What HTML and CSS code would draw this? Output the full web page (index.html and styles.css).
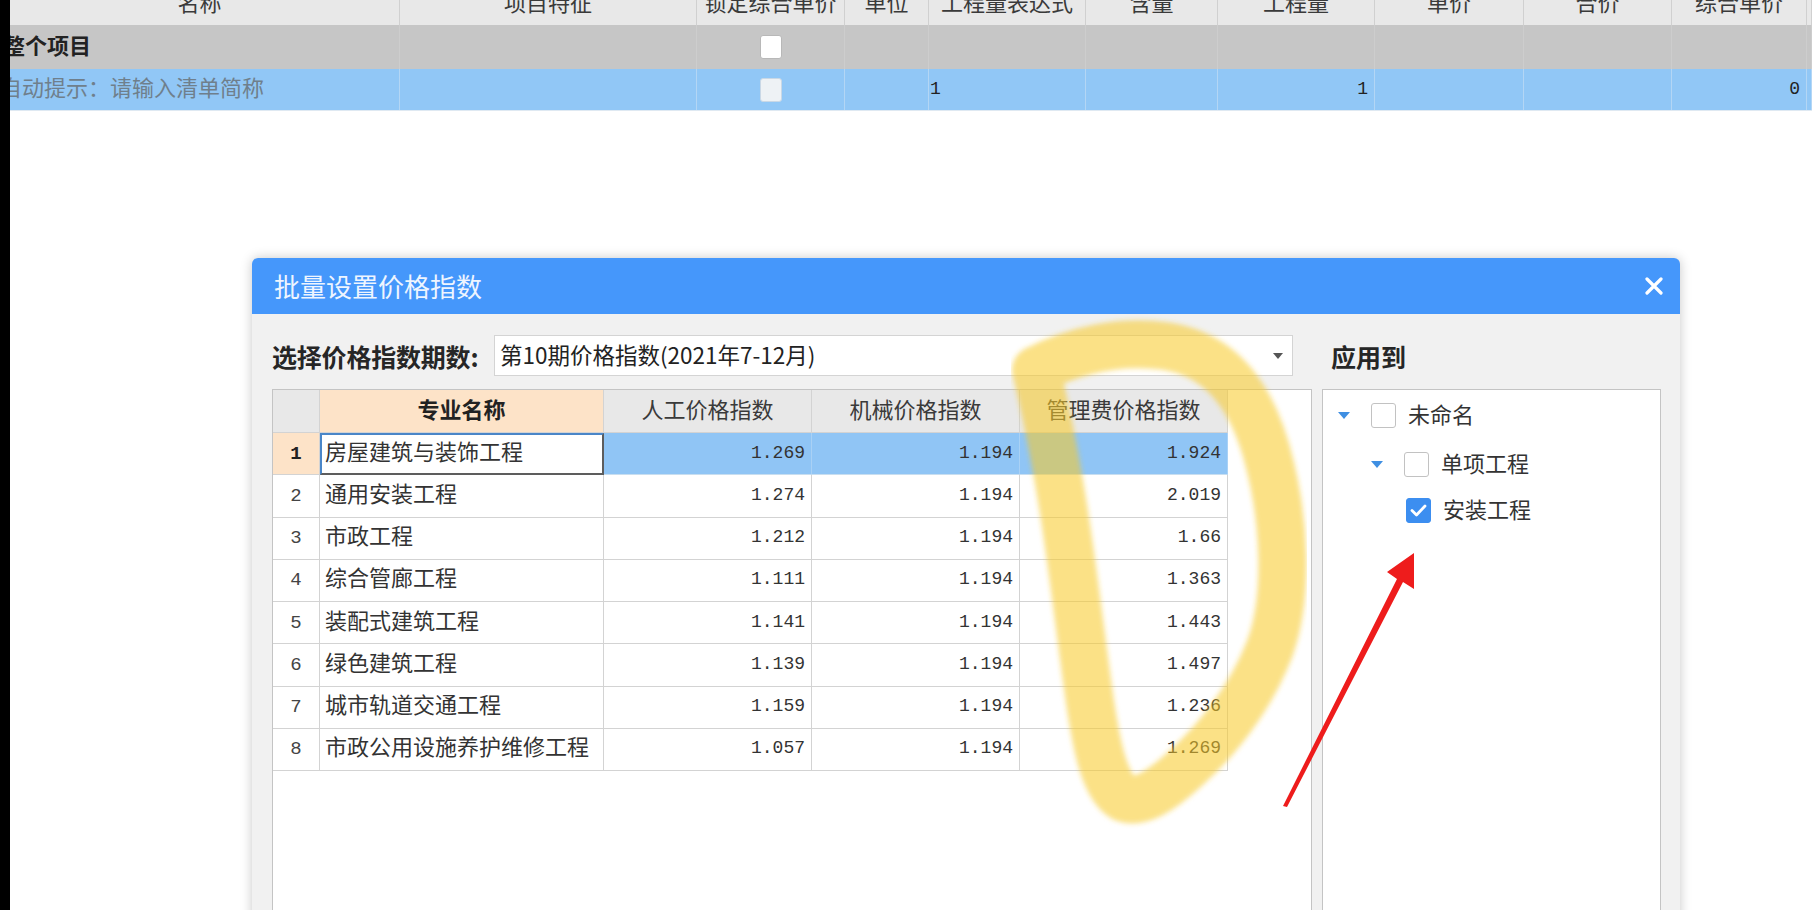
FILE: index.html
```html
<!DOCTYPE html>
<html lang="zh-CN">
<head>
<meta charset="utf-8">
<title>批量设置价格指数</title>
<link rel="stylesheet" href="styles.css">
</head>
<body>
<div class="screen">
  <div class="edge"></div>
  <div class="app">
    <div class="topgrid">
      <div class="trow thead">
        <div class="tc">名称</div>
        <div class="tc">项目特征</div>
        <div class="tc">锁定综合单价</div>
        <div class="tc">单位</div>
        <div class="tc">工程量表达式</div>
        <div class="tc">含量</div>
        <div class="tc">工程量</div>
        <div class="tc">单价</div>
        <div class="tc">合价</div>
        <div class="tc">综合单价</div>
        <div class="tc"></div>
      </div>
      <div class="trow tgroup">
        <div class="tc tname">整个项目</div>
        <div class="tc"></div>
        <div class="tc tcheck"><span class="mini-cb"></span></div>
        <div class="tc"></div>
        <div class="tc"></div>
        <div class="tc"></div>
        <div class="tc"></div>
        <div class="tc"></div>
        <div class="tc"></div>
        <div class="tc"></div>
        <div class="tc"></div>
      </div>
      <div class="trow tsel">
        <div class="tc thint">自动提示：请输入清单简称</div>
        <div class="tc"></div>
        <div class="tc tcheck"><span class="mini-cb dim"></span></div>
        <div class="tc"></div>
        <div class="tc tnum-l">1</div>
        <div class="tc"></div>
        <div class="tc tnum-r">1</div>
        <div class="tc"></div>
        <div class="tc"></div>
        <div class="tc tnum-r">0</div>
        <div class="tc"></div>
      </div>
    </div>

    <div class="stage">
      <div class="dialog">
        <div class="dlg-title">
          <span class="dlg-title-text">批量设置价格指数</span>
          <svg class="dlg-close" width="18" height="18" viewBox="0 0 18 18"><path d="M2 2 L16 16 M16 2 L2 16" stroke="#ffffff" stroke-width="3.2" stroke-linecap="round"/></svg>
        </div>
        <div class="dlg-body">
          <div class="left">
            <div class="period-row">
              <span class="period-label">选择价格指数期数:</span>
              <div class="select">
                <span class="select-text">第10期价格指数(2021年7-12月)</span>
                <span class="caret"></span>
              </div>
            </div>
            <div class="grid">
              <div class="g-row g-head">
                <div class="gc gc-no"></div>
                <div class="gc gc-name-head">专业名称</div>
                <div class="gc gc-head">人工价格指数</div>
                <div class="gc gc-head">机械价格指数</div>
                <div class="gc gc-head">管理费价格指数</div>
              </div>
              <div class="g-row g-active">
                <div class="gc gc-no no-active">1</div>
                <div class="gc gc-name gc-edit">房屋建筑与装饰工程</div>
                <div class="gc gc-num">1.269</div>
                <div class="gc gc-num">1.194</div>
                <div class="gc gc-num">1.924</div>
              </div>
              <div class="g-row">
                <div class="gc gc-no">2</div>
                <div class="gc gc-name">通用安装工程</div>
                <div class="gc gc-num">1.274</div>
                <div class="gc gc-num">1.194</div>
                <div class="gc gc-num">2.019</div>
              </div>
              <div class="g-row">
                <div class="gc gc-no">3</div>
                <div class="gc gc-name">市政工程</div>
                <div class="gc gc-num">1.212</div>
                <div class="gc gc-num">1.194</div>
                <div class="gc gc-num">1.66</div>
              </div>
              <div class="g-row">
                <div class="gc gc-no">4</div>
                <div class="gc gc-name">综合管廊工程</div>
                <div class="gc gc-num">1.111</div>
                <div class="gc gc-num">1.194</div>
                <div class="gc gc-num">1.363</div>
              </div>
              <div class="g-row">
                <div class="gc gc-no">5</div>
                <div class="gc gc-name">装配式建筑工程</div>
                <div class="gc gc-num">1.141</div>
                <div class="gc gc-num">1.194</div>
                <div class="gc gc-num">1.443</div>
              </div>
              <div class="g-row">
                <div class="gc gc-no">6</div>
                <div class="gc gc-name">绿色建筑工程</div>
                <div class="gc gc-num">1.139</div>
                <div class="gc gc-num">1.194</div>
                <div class="gc gc-num">1.497</div>
              </div>
              <div class="g-row">
                <div class="gc gc-no">7</div>
                <div class="gc gc-name">城市轨道交通工程</div>
                <div class="gc gc-num">1.159</div>
                <div class="gc gc-num">1.194</div>
                <div class="gc gc-num">1.236</div>
              </div>
              <div class="g-row">
                <div class="gc gc-no">8</div>
                <div class="gc gc-name">市政公用设施养护维修工程</div>
                <div class="gc gc-num">1.057</div>
                <div class="gc gc-num">1.194</div>
                <div class="gc gc-num">1.269</div>
              </div>
            </div>
          </div>
          <div class="right">
            <div class="apply-title">应用到</div>
            <div class="tree">
              <div class="tree-row lvl0">
                <span class="tri"></span>
                <span class="cb"></span>
                <span class="tree-label">未命名</span>
              </div>
              <div class="tree-row lvl1">
                <span class="tri"></span>
                <span class="cb"></span>
                <span class="tree-label">单项工程</span>
              </div>
              <div class="tree-row lvl2">
                <span class="cb checked"><svg width="25" height="25" viewBox="0 0 25 25"><path d="M6 12.5 L10.5 17 L19 8" fill="none" stroke="#ffffff" stroke-width="2.8" stroke-linecap="round" stroke-linejoin="round"/></svg></span>
                <span class="tree-label">安装工程</span>
              </div>
            </div>
          </div>
        </div>
      </div>
    </div>
  </div>
</div>

<svg class="annot" width="1812" height="910" viewBox="0 0 1812 910">
  <defs>
    <filter id="soft" x="-10%" y="-10%" width="120%" height="120%">
      <feGaussianBlur stdDeviation="2.5"/>
    </filter>
  </defs>
  <path class="marker" filter="url(#soft)" d="M1036 370 C1075 350 1120 340 1165 346 C1220 354 1250 395 1266 450 C1286 520 1288 598 1270 648 C1250 700 1215 742 1186 768 C1160 792 1140 804 1124 798 C1104 788 1096 742 1090 702 C1080 632 1072 560 1062 500 C1054 452 1046 410 1036 370"/>
  <polygon class="arrow" points="1414,553 1387,572 1397,579 1283,806 1287,807 1403,582 1414,589"/>
</svg>
</body>
</html>
```

FILE: styles.css
```css
html, body {
  margin: 0;
  padding: 0;
}

body {
  width: 1812px;
  height: 910px;
  overflow: hidden;
  background: #ffffff;
  font-family: "Noto Sans CJK SC", "Noto Sans", sans-serif;
  color: #333333;
  position: relative;
}

.screen {
  display: flex;
  height: 910px;
}

.edge {
  width: 10px;
  flex: none;
  background: #000000;
}

.app {
  flex: 1;
  min-width: 0;
  overflow: hidden;
  display: flex;
  flex-direction: column;
}

/* ---------- background list grid ---------- */
.topgrid {
  margin-left: -10px;
  overflow: hidden;
  flex: none;
}

.trow {
  display: grid;
  grid-template-columns: 400px 297px 148px 84px 157px 132px 157px 149px 148px 135px 1fr;
}

.tc {
  box-sizing: border-box;
  border-right: 1px solid #d0d0d0;
  font-size: 22px;
  white-space: nowrap;
  overflow: hidden;
}

.thead {
  height: 44px;
  margin-top: -19px;
  background: #e8e8e8;
}

.thead .tc {
  line-height: 40px;
  text-align: center;
  color: #3a3a3a;
}

.tgroup {
  height: 44px;
  background: #c6c6c6;
}

.tgroup .tc {
  line-height: 38px;
  border-right-color: #cdcdcd;
}

.tname {
  font-weight: bold;
  color: #222222;
  padding-left: 3px;
}

.tsel {
  height: 41px;
  background: #91c7f6;
  border-bottom: 1px solid #dfe9f2;
}

.tsel .tc {
  line-height: 40px;
  border-right-color: #b3d6f5;
}

.tsel .thint {
  color: #6f7f8c;
  padding-left: 0;
  line-height: 34px;
}

.tcheck {
  display: flex;
  align-items: center;
  justify-content: center;
}

.mini-cb {
  width: 22px;
  height: 24px;
  box-sizing: border-box;
  background: #ffffff;
  border: 1px solid #b8b8b8;
  border-radius: 3px;
}

.mini-cb.dim {
  background: #eef2f5;
  border-color: #c9d8e6;
}

.tnum-l,
.tnum-r {
  font-family: "Liberation Mono", monospace;
  font-size: 18px;
  color: #222222;
}

.tnum-l {
  padding-left: 1px;
}

.tnum-r {
  text-align: right;
  padding-right: 6px;
}

/* ---------- dialog ---------- */
.stage {
  flex: 1;
  padding: 147px 0 0 242px;
}

.dialog {
  width: 1428px;
  height: 720px;
  background: #f1f1f1;
  border-radius: 6px 6px 0 0;
  box-shadow: 0 0 12px rgba(0, 0, 0, 0.22);
}

.dlg-title {
  height: 56px;
  box-sizing: border-box;
  background: #4597fb;
  border-radius: 6px 6px 0 0;
  display: flex;
  align-items: center;
  justify-content: space-between;
  padding: 0 17px 0 22px;
}

.dlg-title-text {
  color: #eef5ff;
  font-size: 26px;
  line-height: 30px;
}

.dlg-close {
  display: block;
}

.dlg-body {
  display: flex;
  gap: 10px;
  padding: 21px 19px 0 20px;
}

.left {
  width: 1040px;
  display: flex;
  flex-direction: column;
  gap: 13px;
}

.period-row {
  display: flex;
  align-items: center;
  height: 41px;
}

.period-label {
  width: 222px;
  flex: none;
  font-size: 25px;
  font-weight: bold;
  color: #262626;
  white-space: nowrap;
  letter-spacing: -0.2px;
}

.select {
  width: 799px;
  height: 41px;
  box-sizing: border-box;
  background: #ffffff;
  border: 1px solid #d4d4d4;
  display: flex;
  align-items: center;
  justify-content: space-between;
  padding: 0 9px 0 5px;
}

.select-text {
  font-size: 22.5px;
  line-height: 30px;
  padding-bottom: 3px;
  color: #222222;
  white-space: nowrap;
}

.caret {
  width: 0;
  height: 0;
  border-left: 5px solid transparent;
  border-right: 5px solid transparent;
  border-top: 6px solid #555555;
}

.grid {
  height: 540px;
  box-sizing: border-box;
  background: #ffffff;
  border: 1px solid #c4c4c4;
}

.g-row {
  display: grid;
  grid-template-columns: 47px 284px 208px 208px 208px;
  height: 42.25px;
}

.g-head {
  height: 43px;
}

.gc {
  box-sizing: border-box;
  border-right: 1px solid #d3d3d3;
  border-bottom: 1px solid #d3d3d3;
  font-size: 22px;
  color: #333333;
  white-space: nowrap;
  overflow: hidden;
  display: flex;
  align-items: center;
}

.g-head .gc {
  background: #e8e8e8;
  justify-content: center;
  color: #3a3a3a;
  padding-bottom: 6px;
}

.g-head .gc-name-head {
  background: #fde3c8;
  font-weight: bold;
  color: #222222;
}

.gc-no {
  justify-content: center;
  font-family: "Liberation Mono", monospace;
  font-size: 19px;
  color: #444444;
}

.no-active {
  background: #fde3c8;
  font-weight: bold;
  color: #222222;
}

.gc-name {
  padding-left: 5px;
  padding-bottom: 8px;
}

.gc-edit {
  padding-left: 3px;
  border: 2px solid #5d5d5d;
  border-top-color: #4a86c8;
  border-left-color: #4a86c8;
  background: #ffffff;
}

.gc-num {
  justify-content: flex-end;
  padding-right: 6px;
  padding-bottom: 2px;
  font-family: "Liberation Mono", monospace;
  font-size: 18px;
  color: #333333;
}

.g-active .gc-num {
  background: #90c5f5;
  border-right-color: #a9d1f5;
  border-bottom-color: #c8def0;
}

/* ---------- apply-to tree ---------- */
.right {
  width: 339px;
  display: flex;
  flex-direction: column;
  gap: 13px;
}

.apply-title {
  height: 41px;
  display: flex;
  align-items: center;
  padding-left: 9px;
  font-size: 25px;
  font-weight: bold;
  color: #262626;
}

.tree {
  height: 540px;
  box-sizing: border-box;
  background: #ffffff;
  border: 1px solid #c4c4c4;
}

.tree-row {
  display: flex;
  align-items: center;
}

.lvl0 {
  height: 48px;
  margin-top: 1px;
  padding-left: 15px;
}

.lvl1 {
  height: 50px;
  padding-left: 48px;
}

.lvl2 {
  height: 42px;
  padding-left: 83px;
}

.tri {
  width: 0;
  height: 0;
  border-left: 6.5px solid transparent;
  border-right: 6.5px solid transparent;
  border-top: 7px solid #3f8fe2;
  margin-right: 21px;
}

.cb {
  width: 25px;
  height: 25px;
  box-sizing: border-box;
  border: 1px solid #c2c2c2;
  border-radius: 3px;
  background: #ffffff;
  margin-right: 12px;
  flex: none;
}

.cb.checked {
  background: #3c8ef0;
  border-color: #3c8ef0;
}

.cb.checked svg {
  display: block;
  margin: -1px;
}

.tree-label {
  font-size: 22px;
  line-height: 30px;
  padding-bottom: 4px;
  color: #333333;
  white-space: nowrap;
}

/* ---------- hand-drawn annotations over the screenshot ---------- */
.annot {
  position: absolute;
  left: 0;
  top: 0;
  pointer-events: none;
}

.marker {
  fill: none;
  stroke: rgba(248, 202, 40, 0.56);
  stroke-width: 48;
  stroke-linecap: round;
  stroke-linejoin: round;
}

.arrow {
  fill: #ee1c1c;
}
```
